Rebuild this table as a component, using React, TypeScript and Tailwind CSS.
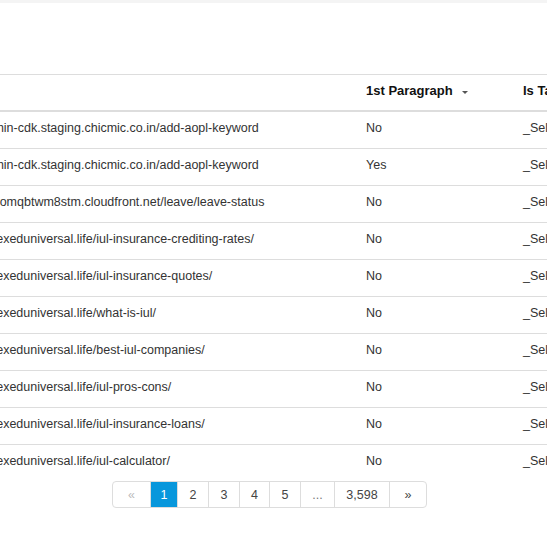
import React from "react";

const rows: [string, string][] = [
  ["https://admin-cdk.staging.chicmic.co.in/add-aopl-keyword", "No"],
  ["https://admin-cdk.staging.chicmic.co.in/add-aopl-keyword", "Yes"],
  ["https://d1zomqbtwm8stm.cloudfront.net/leave/leave-status", "No"],
  ["https://indexeduniversal.life/iul-insurance-crediting-rates/", "No"],
  ["https://indexeduniversal.life/iul-insurance-quotes/", "No"],
  ["https://indexeduniversal.life/what-is-iul/", "No"],
  ["https://indexeduniversal.life/best-iul-companies/", "No"],
  ["https://indexeduniversal.life/iul-pros-cons/", "No"],
  ["https://indexeduniversal.life/iul-insurance-loans/", "No"],
  ["https://indexeduniversal.life/iul-calculator/", "No"],
];

const pages: { label: string; w: string; cls: string }[] = [
  { label: "«", w: "w-[39px]", cls: "text-[#bbbbbb] rounded-l-[4px]" },
  { label: "1", w: "w-[28px]", cls: "bg-[#0897dc] border-[#0897dc] text-white" },
  { label: "2", w: "w-[32px]", cls: "text-[#444]" },
  { label: "3", w: "w-[32px]", cls: "text-[#444]" },
  { label: "4", w: "w-[31px]", cls: "text-[#444]" },
  { label: "5", w: "w-[32px]", cls: "text-[#444]" },
  { label: "...", w: "w-[35px]", cls: "text-[#777]" },
  { label: "3,598", w: "w-[56px]", cls: "text-[#444]" },
  { label: "»", w: "w-[38px]", cls: "text-[#444] rounded-r-[4px]" },
];

export default function App() {
  return (
    <div
      className="w-[547px] h-[546px] bg-white overflow-hidden text-[12.5px] leading-[20px] text-[#333]"
      style={{ fontFamily: '"Liberation Sans", Arial, sans-serif' }}
    >
      <div className="h-[3px] bg-[#f4f4f4]" />
      <div className="h-[71px]" />
      <div className="w-[547px] overflow-hidden">
        <table className="table-fixed border-collapse ml-[-66px] w-[781px]">
          <colgroup>
            <col className="w-[424px]" />
            <col className="w-[157px]" />
            <col className="w-[200px]" />
          </colgroup>
          <thead>
            <tr className="border-t border-[#dddddd]">
              <th className="px-[8px] pt-[6px] pb-[9px] text-left text-[13px] font-bold text-[#111] border-b-2 border-[#dddddd]"></th>
              <th className="px-[8px] pt-[6px] pb-[9px] text-left text-[13px] font-bold text-[#111] border-b-2 border-[#dddddd] whitespace-nowrap">
                <span className="inline-flex items-center">
                  1st Paragraph
                  <span className="ml-[9px] mt-[3px] inline-block w-0 h-0 border-l-[3px] border-r-[3px] border-t-[3px] border-l-transparent border-r-transparent border-t-[#555]" />
                </span>
              </th>
              <th className="px-[8px] pt-[6px] pb-[9px] text-left text-[13px] font-bold text-[#111] border-b-2 border-[#dddddd] whitespace-nowrap">
                Is Target Keyword
              </th>
            </tr>
          </thead>
          <tbody>
            {rows.map(([url, p], i) => (
              <tr key={i} className="border-t border-[#dddddd]">
                <td className="px-[8px] pt-[6px] pb-[10px] whitespace-nowrap">{url}</td>
                <td className="px-[8px] pt-[6px] pb-[10px] whitespace-nowrap">{p}</td>
                <td className="px-[8px] pt-[6px] pb-[10px] whitespace-nowrap">_Select_</td>
              </tr>
            ))}
          </tbody>
        </table>
      </div>
      <div className="flex ml-[112px]">
        {pages.map((pg, i) => (
          <div
            key={i}
            className={`h-[27px] flex items-center justify-center border border-[#dddddd] ${i > 0 ? "-ml-px" : ""} ${pg.w} ${pg.cls}`}
          >
            {pg.label}
          </div>
        ))}
      </div>
    </div>
  );
}
